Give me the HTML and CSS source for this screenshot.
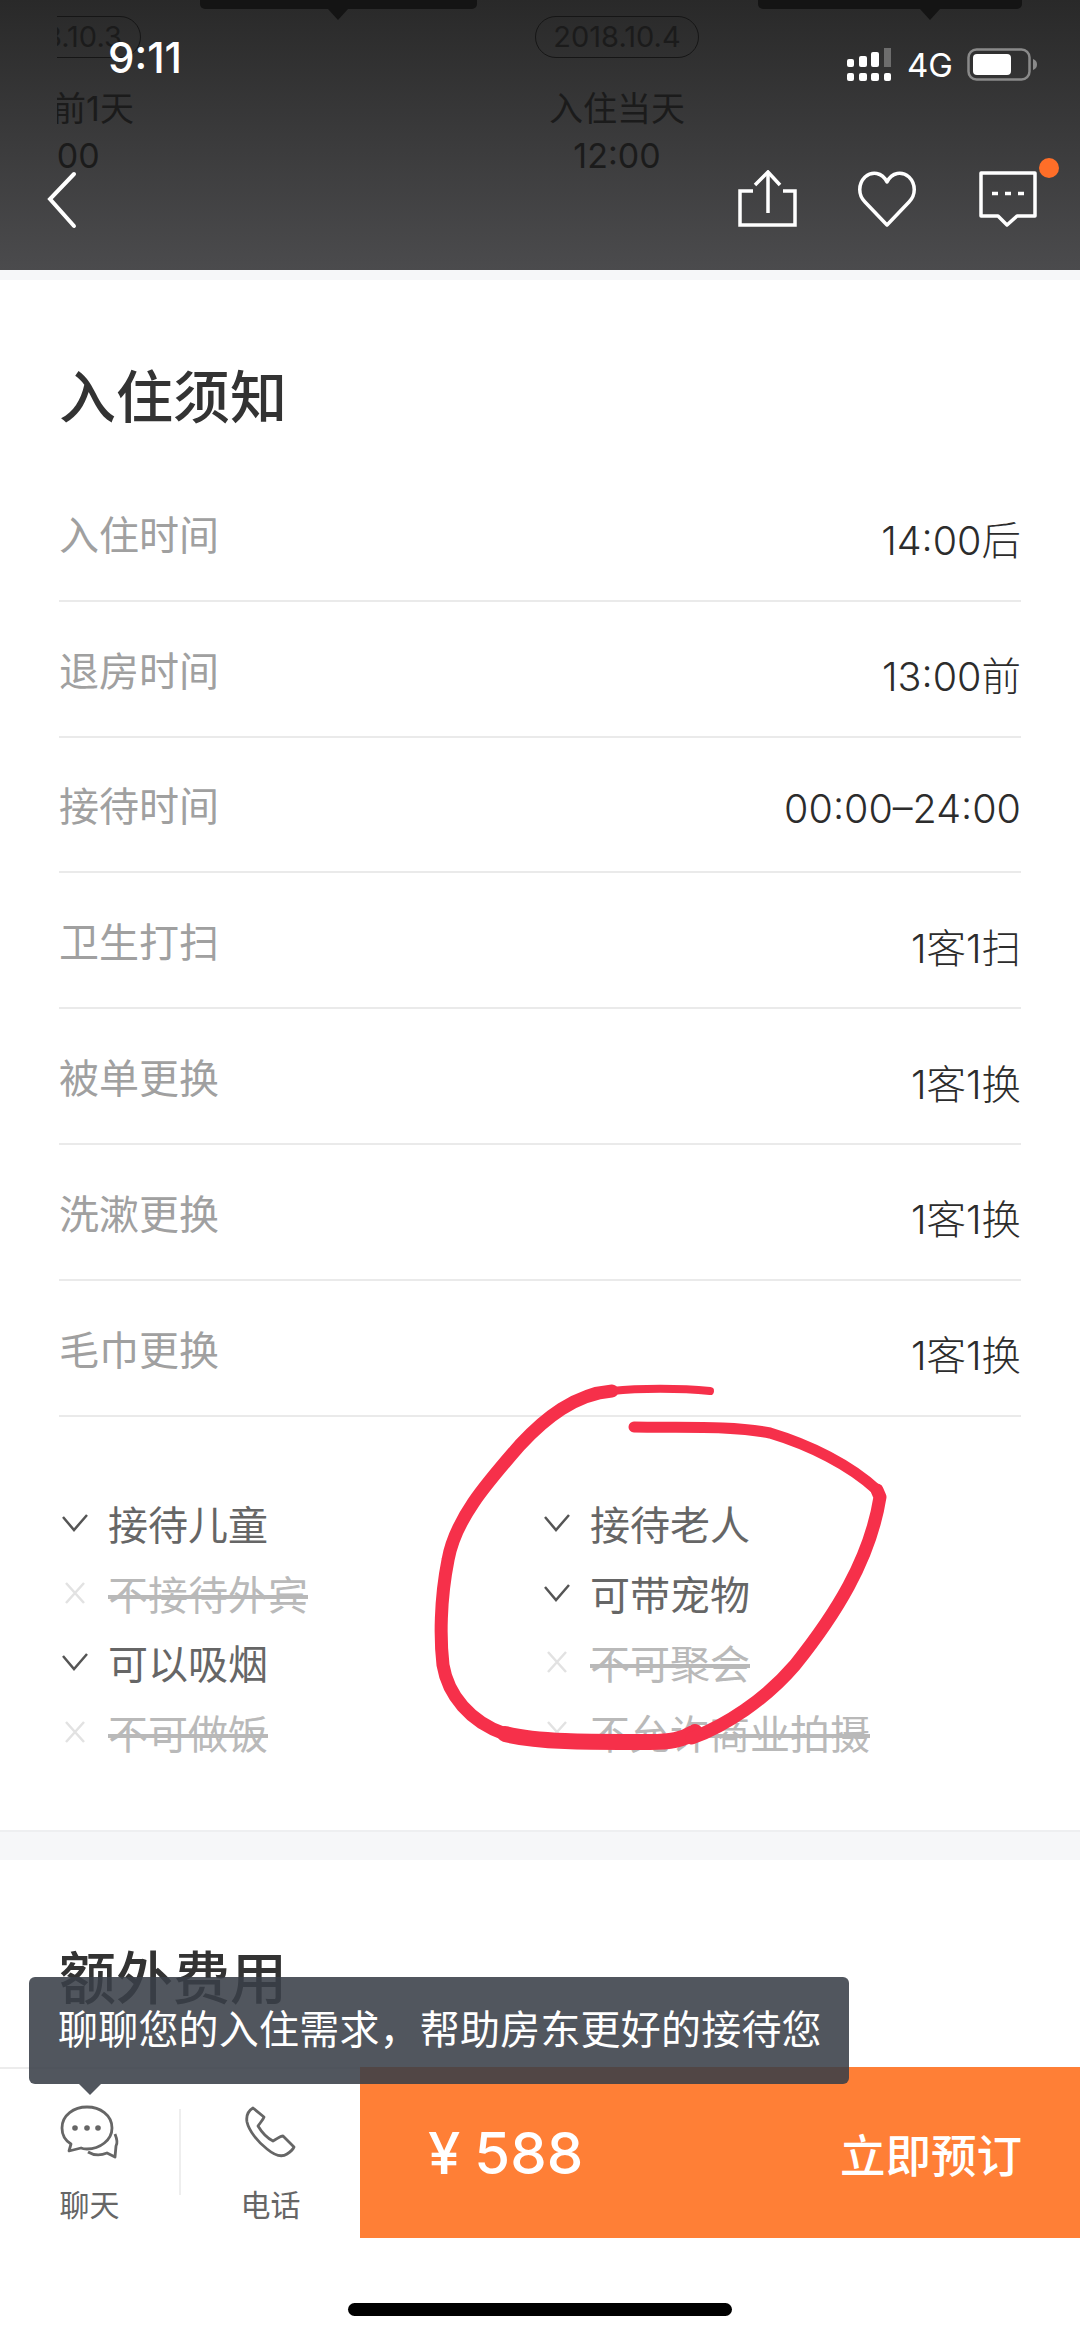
FILE: index.html
```html
<!DOCTYPE html>
<html>
  <head>
    <title>入住须知</title>
    <meta charset="utf-8">
    <link rel="stylesheet" href="styles.css">
  </head>
  <body>
    <div class="page">
      <header class="header">
        <div class="timeline">
          <div class="day day-clipped">
            <span class="pill">2018.10.3</span>
            <span class="day-line">入住前1天</span>
            <span class="day-line">12:00</span>
          </div>
          <div class="day">
            <span class="pill">2018.10.4</span>
            <span class="day-line">入住当天</span>
            <span class="day-line">12:00</span>
          </div>
        </div>
        <div class="hint hint-one"></div>
        <div class="hint hint-two"></div>

        <div class="status">
          <span class="clock">9:11</span>
          <div class="status-right">
            <svg class="signal" width="46" height="34" viewBox="0 0 46 34">
              <rect x="0" y="11" width="7" height="8" rx="2" fill="#fff"/>
              <rect x="12" y="8" width="8" height="11" rx="2" fill="#fff"/>
              <rect x="24" y="4" width="8" height="15" rx="2" fill="#fff"/>
              <rect x="37" y="0" width="7" height="19" fill="#6d6d6d"/>
              <rect x="0" y="25" width="7" height="8" rx="2" fill="#fff"/>
              <rect x="12" y="25" width="8" height="8" rx="2" fill="#fff"/>
              <rect x="24" y="25" width="8" height="8" rx="2" fill="#fff"/>
              <rect x="37" y="25" width="7" height="8" rx="2" fill="#fff"/>
            </svg>
            <span class="network">4G</span>
            <svg class="battery" width="72" height="34" viewBox="0 0 72 34">
              <rect x="1.5" y="1.5" width="61" height="30" rx="8" fill="none" stroke="#8a8a8a" stroke-width="2.5"/>
              <rect x="6" y="6" width="38" height="21" rx="4" fill="#fff"/>
              <path d="M66 11 C69 12 70 14 70 16.500 C70 19 69 21 66 22 Z" fill="#8a8a8a"/>
            </svg>
          </div>
        </div>

        <nav class="nav">
          <svg class="back" width="32" height="60" viewBox="0 0 32 60">
            <path d="M28 4 L4 29 L28 56" fill="none" stroke="#fff" stroke-width="4" stroke-linecap="round" stroke-linejoin="miter"/>
          </svg>
          <div class="nav-actions">
            <svg width="60" height="60" viewBox="0 0 60 60" fill="none" stroke="#fff" stroke-width="3.500">
              <path d="M30 3 V43"/>
              <path d="M17 15 L30 2 L42 15"/>
              <path d="M15 21 H2 V55 H57 V21 H45"/>
            </svg>
            <svg width="60" height="60" viewBox="0 0 60 60" fill="none" stroke="#fff" stroke-width="3.500" stroke-linejoin="round">
              <path d="M29 55 L7 32 C0 25 0 14 7 7 C14 1 24 2 29 12 C34 2 44 1 51 7 C58 14 58 25 51 32 Z"/>
            </svg>
            <div class="nav-msg">
              <svg width="60" height="60" viewBox="0 0 60 60" fill="none" stroke="#fff" stroke-width="3.500" stroke-linejoin="round">
                <path d="M3 3 H57 V46 H39 L29 55 L20 46 H3 Z"/>
                <path d="M14 23.500 H20 M27 23.500 H33 M40 23.500 H46"/>
              </svg>
              <span class="dot"></span>
            </div>
          </div>
        </nav>
      </header>

      <main class="main">
        <section class="section">
          <h2 class="section-title">入住须知</h2>
          <div class="row"><span class="row-label">入住时间</span><span class="row-value">14:00后</span></div>
          <div class="row"><span class="row-label">退房时间</span><span class="row-value">13:00前</span></div>
          <div class="row"><span class="row-label">接待时间</span><span class="row-value">00:00–24:00</span></div>
          <div class="row"><span class="row-label">卫生打扫</span><span class="row-value">1客1扫</span></div>
          <div class="row"><span class="row-label">被单更换</span><span class="row-value">1客1换</span></div>
          <div class="row"><span class="row-label">洗漱更换</span><span class="row-value">1客1换</span></div>
          <div class="row"><span class="row-label">毛巾更换</span><span class="row-value">1客1换</span></div>

          <div class="rules">
            <div class="rule"><svg class="mark" viewBox="0 0 28 22"><path d="M2 5 L13 18 L26 3" stroke="#555"/></svg><span>接待儿童</span></div>
            <div class="rule"><svg class="mark" viewBox="0 0 28 22"><path d="M2 5 L13 18 L26 3" stroke="#555"/></svg><span>接待老人</span></div>
            <div class="rule rule-off"><svg class="mark" viewBox="0 0 28 22"><path d="M5 1 L23 21 M23 1 L5 21" stroke="#e2e2e2"/></svg><span>不接待外宾</span></div>
            <div class="rule"><svg class="mark" viewBox="0 0 28 22"><path d="M2 5 L13 18 L26 3" stroke="#555"/></svg><span>可带宠物</span></div>
            <div class="rule"><svg class="mark" viewBox="0 0 28 22"><path d="M2 5 L13 18 L26 3" stroke="#555"/></svg><span>可以吸烟</span></div>
            <div class="rule rule-off"><svg class="mark" viewBox="0 0 28 22"><path d="M5 1 L23 21 M23 1 L5 21" stroke="#e2e2e2"/></svg><span>不可聚会</span></div>
            <div class="rule rule-off"><svg class="mark" viewBox="0 0 28 22"><path d="M5 1 L23 21 M23 1 L5 21" stroke="#e2e2e2"/></svg><span>不可做饭</span></div>
            <div class="rule rule-off"><svg class="mark" viewBox="0 0 28 22"><path d="M5 1 L23 21 M23 1 L5 21" stroke="#e2e2e2"/></svg><span>不允许商业拍摄</span></div>
          </div>
        </section>

        <section class="section section-next">
          <h2 class="section-title">额外费用</h2>
        </section>
      </main>

      <div class="bottom">
        <div class="tip">聊聊您的入住需求，帮助房东更好的接待您</div>
        <div class="tab">
          <svg width="60" height="56" viewBox="0 0 60 56" fill="none" stroke="#666" stroke-width="2.800" stroke-linejoin="round">
            <path d="M27 2 C14 2 2 10 2 23 C2 31 6 36 11 39 L9 46 L21 43 C23 44 25 44 27 44 C40 44 52 35 52 23 C52 10 40 2 27 2 Z"/>
            <path d="M55 29 C57 34 58 38 56 41 L55 52 L47 48 C40 51 33 50 28 47"/>
            <circle cx="15" cy="23" r="2.800" fill="#666" stroke="none"/>
            <circle cx="27" cy="23" r="2.800" fill="#666" stroke="none"/>
            <circle cx="38" cy="23" r="2.800" fill="#666" stroke="none"/>
          </svg>
          <span class="tab-text">聊天</span>
        </div>
        <div class="tab-sep"></div>
        <div class="tab">
          <svg width="52" height="56" viewBox="0 0 52 56" fill="none" stroke="#666" stroke-width="2.800" stroke-linejoin="round">
            <path d="M8 3 C3 6 1 11 2 17 C4 26 13 37 22 44 C28 49 36 53 42 49 C45 47 48 45 49 42 L38 31 C35 31 32 34 28 36 C22 33 16 26 13 21 C15 18 18 15 19 12 Z"/>
          </svg>
          <span class="tab-text">电话</span>
        </div>
        <div class="book">
          <span class="price"><span class="yen">¥</span>588</span>
          <span class="book-text">立即预订</span>
        </div>
      </div>

      <div class="home"><span class="home-bar"></span></div>

      <svg class="scribble" width="1080" height="2337" viewBox="0 0 1080 2337" fill="none" stroke="#f6304a" stroke-linecap="round" stroke-linejoin="round">
        <path stroke-width="8" d="M710 1391 C680 1388 640 1388 612 1391"/>
        <path stroke-width="13" d="M612 1391 C575 1394 545 1418 520 1445 C485 1485 455 1520 448 1560 C440 1600 440 1640 443 1665 C448 1695 470 1722 505 1734"/>
        <path stroke-width="16" d="M505 1734 C540 1743 600 1742 650 1742 C670 1742 682 1740 695 1732"/>
        <path stroke-width="13" d="M692 1738 C725 1726 765 1700 795 1665 C835 1615 870 1560 880 1497 L877 1490"/>
        <path stroke-width="11" d="M877 1490 C850 1465 810 1445 770 1433 C730 1425 680 1428 634 1427"/>
      </svg>
    </div>
  </body>
</html>
```

FILE: styles.css
```css
* {
  box-sizing: border-box;
}
body {
  margin: 0;
  background: #fff;
  font-family: Inter, "Noto Sans CJK SC", sans-serif;
  color: #333;
}
.page {
  position: relative;
  width: 1080px;
  height: 2337px;
  display: flex;
  flex-direction: column;
  overflow: hidden;
}

/* top bar, the page behind it shows through */
.header {
  position: relative;
  height: 270px;
  flex-shrink: 0;
  background: linear-gradient(#292929, #4b4b4d);
  overflow: hidden;
}
.timeline {
  position: absolute;
  top: 16px;
  left: -91px;
  display: flex;
  gap: 258px;
}
.day {
  width: 300px;
  display: flex;
  flex-direction: column;
  align-items: center;
  color: #1b1b1b;
}
.day-clipped {
  clip-path: inset(0 0 0 148px);
}
.day-clipped .day-line:last-child {
  margin-right: 6px;
}
.pill {
  width: 164px;
  height: 42px;
  border: 1.5px solid #161616;
  border-radius: 21px;
  font-size: 29px;
  line-height: 39px;
  text-align: center;
}
.day-line {
  font-size: 34px;
  line-height: 47px;
}
.pill + .day-line {
  margin-top: 27px;
}
.hint {
  position: absolute;
  top: 0;
  height: 9px;
  background: #141414;
  border-radius: 0 0 5px 5px;
}
.hint::after {
  content: "";
  position: absolute;
  top: 9px;
  border-left: 10px solid transparent;
  border-right: 10px solid transparent;
  border-top: 11px solid #141414;
}
.hint-one {
  left: 200px;
  width: 277px;
}
.hint-one::after {
  left: 128px;
}
.hint-two {
  left: 758px;
  width: 264px;
}
.hint-two::after {
  left: 162px;
}

.status {
  position: relative;
  height: 114px;
  padding: 0 41px 0 108px;
  display: flex;
  justify-content: space-between;
  align-items: center;
  color: #fff;
}
.clock {
  font-size: 42px;
  font-weight: 500;
}
.status-right {
  display: flex;
  align-items: center;
  margin-top: 16px;
}
.signal {
  margin-right: 14px;
}
.network {
  font-size: 33px;
  margin-right: 14px;
}
.nav {
  position: relative;
  margin-top: 56px;
  height: 60px;
  padding: 0 42px 0 46px;
  display: flex;
  justify-content: space-between;
  align-items: center;
}
.nav-actions {
  display: flex;
  gap: 60px;
}
.nav-msg {
  position: relative;
  height: 60px;
}
.dot {
  position: absolute;
  top: -12px;
  right: -21px;
  width: 20px;
  height: 20px;
  border-radius: 50%;
  background: #ff6e28;
}

/* content */
.main {
  flex: 1;
  min-height: 0;
  padding-top: 10px;
  background: #f6f7f9;
  overflow: hidden;
}
.section {
  height: 1552px;
  padding: 0 59px;
  background: #fff;
  border-bottom: 2px solid #eeeff1;
}
.section-next {
  height: auto;
  margin-top: 28px;
  padding-top: 91px;
  padding-bottom: 200px;
  border: 0;
}
.section-title {
  margin: 0;
  padding-top: 90px;
  font-size: 57px;
  font-weight: 500;
  line-height: 56px;
  color: #333;
}
.section-next .section-title {
  padding-top: 0;
}
.section-title + .row {
  margin-top: 40px;
}
.row {
  height: 135.800px;
  display: flex;
  justify-content: space-between;
  align-items: center;
  border-bottom: 2px solid #eaeaea;
}
.row-label {
  font-size: 40px;
  color: #a0a0a0;
}
.row-value {
  margin-top: 10px;
  font-size: 39.500px;
  font-weight: 300;
  color: #2c2c2c;
}
.rules {
  margin-top: 72px;
  display: grid;
  grid-template-columns: 482px 1fr;
  grid-auto-rows: 69.500px;
  margin-left: 2px;
}
.rule {
  display: flex;
  align-items: center;
  gap: 19px;
  font-size: 40px;
  color: #666;
}
.rule-off span {
  color: #b9b9b9;
  text-decoration: line-through;
}
.mark {
  width: 28px;
  height: 22px;
  fill: none;
  stroke-width: 2.500;
}

/* bottom bar */
.bottom {
  position: relative;
  height: 171px;
  flex-shrink: 0;
  display: flex;
  background: #fff;
  border-top: 2px solid #ececec;
}
.tip {
  position: absolute;
  z-index: 2;
  top: -92px;
  left: 29px;
  width: 820px;
  height: 107px;
  padding-left: 29px;
  border-radius: 6px;
  background: rgba(57, 63, 72, 0.88);
  color: #fff;
  font-size: 40px;
  letter-spacing: 0.200px;
  line-height: 106px;
}
.tip::after {
  content: "";
  position: absolute;
  top: 107px;
  left: 50px;
  border-left: 11px solid transparent;
  border-right: 11px solid transparent;
  border-top: 11px solid rgba(57, 63, 72, 0.88);
}
.tab {
  width: 179px;
  padding-top: 36px;
  display: flex;
  flex-direction: column;
  align-items: center;
}
.tab-text {
  margin-top: 24px;
  font-size: 30px;
  line-height: 40px;
  color: #666;
}
.tab-sep {
  width: 2px;
  height: 86px;
  margin-top: 40px;
  background: #eee;
}
.book {
  flex: 1;
  margin-top: -2px;
  padding: 0 58px 0 68px;
  display: flex;
  justify-content: space-between;
  align-items: center;
  background: #ff7f36;
  color: #fff;
}
.price {
  font-size: 58px;
  font-weight: 500;
}
.yen {
  margin-right: 14px;
}
.book-text {
  font-size: 45.500px;
  font-weight: 500;
}
.home {
  height: 99px;
  flex-shrink: 0;
  display: flex;
  justify-content: center;
  padding-top: 65px;
  background: #fff;
}
.home-bar {
  width: 384px;
  height: 13px;
  border-radius: 7px;
  background: #000;
}

/* pen mark someone drew on the screenshot */
.scribble {
  position: absolute;
  top: 0;
  left: 0;
}
```
